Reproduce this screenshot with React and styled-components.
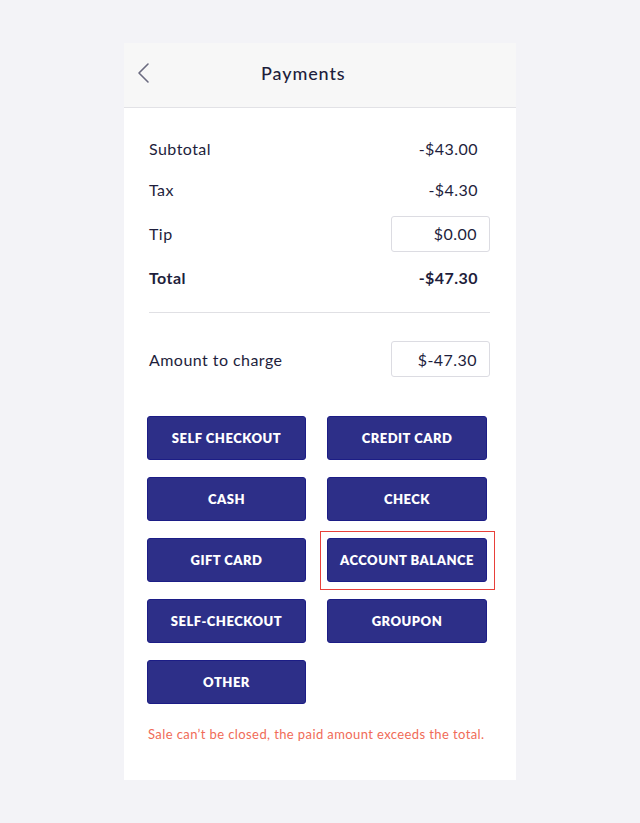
import React from 'react'
import styled, { createGlobalStyle } from 'styled-components'

const GlobalStyle = createGlobalStyle`
  body {
    margin: 0;
    background: #f3f3f7;
    font-family: Lato, "Open Sans", sans-serif;
    color: #1e1e3c;
  }
`

const Page = styled.div`
  display: flex;
  justify-content: center;
  padding-top: 43px;
  min-height: 823px;
  box-sizing: border-box;
`

const Card = styled.div`
  width: 392px;
  height: 737px;
  background: #fff;
  display: flex;
  flex-direction: column;
`

const Header = styled.div`
  height: 65px;
  background: #f7f7f7;
  border-bottom: 1px solid #e2e2e6;
  box-sizing: border-box;
  display: flex;
  align-items: center;
  padding: 0 0 4px 13px;
`

const BackButton = styled.button`
  border: none;
  background: none;
  padding: 0;
  width: 14px;
  display: flex;
  align-items: center;
  cursor: pointer;
`

const Title = styled.h1`
  margin: 0 0 0 110px;
  font-size: 18px;
  font-weight: 500;
  letter-spacing: 0.9px;
  color: #1e1e3c;
`

const Body = styled.div`
  padding: 20px 26px 0 25px;
  display: flex;
  flex-direction: column;
  letter-spacing: 0.45px;
`

const Row = styled.div`
  display: flex;
  justify-content: space-between;
  align-items: center;
  height: ${p => p.$h || 41}px;
  font-size: 16px;
  font-weight: ${p => (p.$bold ? 700 : 400)};
`

const Value = styled.span`
  padding-right: 12px;
`

const Input = styled.div`
  width: 99px;
  height: 36px;
  box-sizing: border-box;
  border: 1px solid #dcdce2;
  border-radius: 3px;
  display: flex;
  align-items: center;
  justify-content: flex-end;
  padding-right: 12px;
  font-size: 16px;
`

const Divider = styled.hr`
  border: none;
  border-top: 1px solid #e0e0e4;
  margin: 14px 0 28px;
`

const Grid = styled.div`
  display: grid;
  grid-template-columns: 159px 160px;
  column-gap: 21px;
  row-gap: 17px;
  margin: 39px 0 0 -2px;
  letter-spacing: 0;
`

const Cell = styled.div`
  position: relative;
`

const PayButton = styled.button`
  width: 100%;
  height: 44px;
  background: #2d2f88;
  border: 1px solid #1c1d86;
  border-radius: 3px;
  color: #fff;
  font-family: Lato, sans-serif;
  font-weight: 800;
  font-size: 13px;
  letter-spacing: 0.5px;
  cursor: pointer;
`

const Highlight = styled.div`
  position: absolute;
  left: -7px;
  right: -8px;
  top: -7px;
  bottom: -8px;
  border: 1.5px solid #e8403a;
  pointer-events: none;
`

const ErrorText = styled.p`
  margin: 22px 0 0 -1px;
  color: #f06b57;
  font-size: 13px;
  letter-spacing: 0.4px;
`

const methods = [
  'SELF CHECKOUT',
  'CREDIT CARD',
  'CASH',
  'CHECK',
  'GIFT CARD',
  'ACCOUNT BALANCE',
  'SELF-CHECKOUT',
  'GROUPON',
  'OTHER',
]

export default function App() {
  return (
    <Page>
      <GlobalStyle />
      <Card>
        <Header>
          <BackButton>
            <svg width="14" height="24" viewBox="0 0 14 24" fill="none">
              <path d="M11 3L2 12l9 9" stroke="#6b6b80" strokeWidth="1.6" strokeLinecap="round" strokeLinejoin="round" />
            </svg>
          </BackButton>
          <Title>Payments</Title>
        </Header>
        <Body>
          <Row>
            <span>Subtotal</span>
            <Value>-$43.00</Value>
          </Row>
          <Row>
            <span>Tax</span>
            <Value>-$4.30</Value>
          </Row>
          <Row $h={47}>
            <span>Tip</span>
            <Input>$0.00</Input>
          </Row>
          <Row $bold $h={41}>
            <span>Total</span>
            <Value>-$47.30</Value>
          </Row>
          <Divider />
          <Row $h={36}>
            <span>Amount to charge</span>
            <Input>$-47.30</Input>
          </Row>
          <Grid>
            {methods.map(m => (
              <Cell key={m}>
                <PayButton>{m}</PayButton>
                {m === 'ACCOUNT BALANCE' && <Highlight />}
              </Cell>
            ))}
          </Grid>
          <ErrorText>Sale can’t be closed, the paid amount exceeds the total.</ErrorText>
        </Body>
      </Card>
    </Page>
  )
}
